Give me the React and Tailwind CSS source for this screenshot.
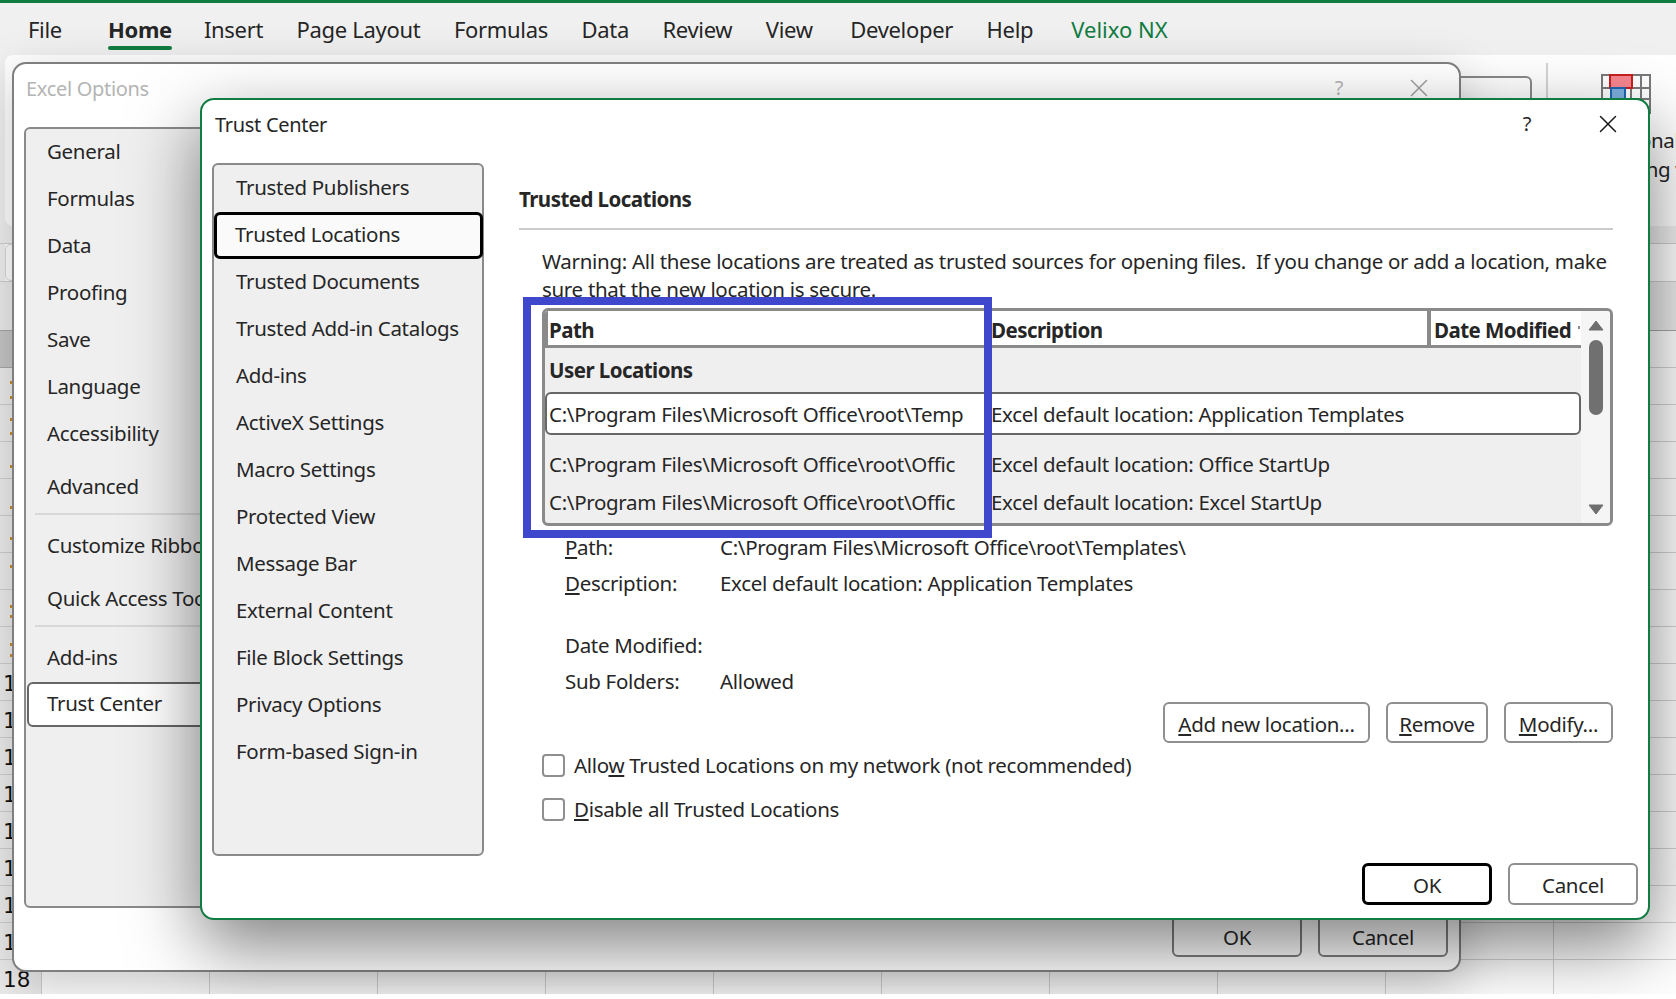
import { X } from "lucide-react";

const tabs = ["Insert", "Page Layout", "Formulas", "Data", "Review", "View", "Developer", "Help"];
const optionsTop = ["General", "Formulas", "Data", "Proofing", "Save", "Language", "Accessibility"];
const trustItems = [
  "Trusted Publishers",
  "Trusted Locations",
  "Trusted Documents",
  "Trusted Add-in Catalogs",
  "Add-ins",
  "ActiveX Settings",
  "Macro Settings",
  "Protected View",
  "Message Bar",
  "External Content",
  "File Block Settings",
  "Privacy Options",
  "Form-based Sign-in",
];
const rows = [1, 2, 3, 4, 5, 6, 7, 8, 9, 10, 11, 12, 13, 14, 15, 16, 17, 18];
const cols = [0, 1, 2, 3, 4, 5, 6, 7, 8, 9];
// bits of the row numbers that stick out left of the Excel Options window
const specks = [381, 396, 418, 432, 465, 506, 537, 565, 605, 615, 643, 654];

function Sheet() {
  return (
    <div className="flex h-[994px] flex-col overflow-hidden bg-white">
      <div className="h-[3px] shrink-0 bg-[#107c41]" />

      {/* tab strip */}
      <div className="flex h-[52px] shrink-0 bg-[#f0f0f0] pl-[28px] pt-[9px] text-[22px] text-[#262626]">
        <span className="h-[34px] leading-[34px]">File</span>
        <span className="ml-[46px] flex h-[38px] flex-col font-bold leading-[34px]">
          Home
          <span className="h-[4px] w-full shrink-0 rounded-sm bg-[#107c41]" />
        </span>
        <div className="ml-[32px] flex gap-[33.5px] leading-[34px]">
          {tabs.map((t) => (
            <span key={t} className={t === "Developer" ? "ml-[4px]" : ""}>
              {t}
            </span>
          ))}
        </div>
        <span className="ml-[38px] leading-[34px] tracking-normal text-[#107c41]">Velixo NX</span>
      </div>

      {/* ribbon, mostly hidden behind the dialogs */}
      <div className="h-[174px] shrink-0 bg-[#f0f0f0] pb-[3px] pl-[5px]">
        <div className="flex h-full items-start rounded-l-lg bg-white">
          <div className="ml-[1395px] mt-[21px] h-[40px] w-[132px] shrink-0 rounded-md border-2 border-[#8a8a8a]" />
          <div className="ml-[14px] mt-[8px] h-[110px] w-[2px] shrink-0 bg-[#d4d4d4]" />
          <div className="ml-[-3px] mt-[19px] flex w-[162px] shrink-0 flex-col items-center leading-[29px] text-[#262626]">
            <svg width="50" height="40" viewBox="0 0 50 40" className="shrink-0">
              <path d="M1 1H49V39H1ZM1 14H49M1 25H49M10 1V39M30 1V39M40 1V39" fill="none" stroke="#7a7a7a" strokeWidth="2" />
              <rect x="9" y="1" width="22" height="13" fill="#f88690" stroke="#c8201f" strokeWidth="2" />
              <rect x="10" y="14" width="14" height="11" fill="#7db1e0" stroke="#1f66b0" strokeWidth="2" />
            </svg>
            <span className="mt-[12px] whitespace-nowrap">Conditional</span>
            <span className="whitespace-nowrap">Formatting ▾</span>
          </div>
        </div>
      </div>

      <div className="h-[14px] shrink-0 bg-[#f0f0f0]" />

      {/* formula bar */}
      <div className="flex h-[39px] shrink-0 border-y border-[#cfcfcf] bg-white">
        <div className="w-[5px] shrink-0 bg-[#f0f0f0]" />
        <div className="h-full w-[100px] rounded-l-md border border-[#d8d8d8] bg-white" />
      </div>

      {/* column headers */}
      <div className="h-[49px] shrink-0 border-b border-[#a8a8a8] bg-[#ececec]" />

      {/* cells */}
      {rows.map((r) => (
        <div key={r} className="flex h-[37px] shrink-0">
          <div
            className={
              r === 1
                ? "h-full w-[42px] shrink-0 border-b border-r border-[#a8a8a8] bg-[#c6c6c6]"
                : "h-full w-[42px] shrink-0 border-b border-r border-[#cfcfcf] bg-[#ededed] pl-[3px] font-['DejaVu_Sans',sans-serif] text-[21.5px] leading-[39px] tracking-normal text-[#111111]"
            }
          >
            {r >= 10 ? r : ""}
          </div>
          {cols.map((c) => (
            <div key={c} className="h-full w-[168px] shrink-0 border-b border-r border-[#d4d4d4]" />
          ))}
        </div>
      ))}
    </div>
  );
}

function OptionsItem({ children, className = "" }) {
  return <div className={`flex h-[47px] items-center whitespace-nowrap pb-[2px] pl-[21px] ${className}`}>{children}</div>;
}

function ExcelOptions() {
  return (
    <div className="absolute left-[12px] top-[62px] flex h-[910px] w-[1449px] flex-col rounded-[14px] border-2 border-[#7f7f7f] bg-white shadow-[0_14px_50px_rgba(0,0,0,0.22)]">
      <div className="flex h-[63px] shrink-0 items-start justify-between pl-[12px] pt-[10px] text-[20px] text-[#b4b4b4]">
        <span>Excel Options</span>
        <div className="mt-[-1px] flex items-center pr-[25px]">
          <span>?</span>
          <X size={30} strokeWidth={1.2} className="ml-[61px] text-[#a0a0a0]" />
        </div>
      </div>
      <div className="ml-[10px] flex h-[781px] w-[500px] shrink-0 flex-col rounded-md border-2 border-[#8a8a8a] bg-[#efefef]">
        {optionsTop.map((t) => (
          <OptionsItem key={t}>{t}</OptionsItem>
        ))}
        <OptionsItem className="mt-[6px]">Advanced</OptionsItem>
        <div className="ml-[9px] mt-[2px] h-[2px] bg-[#d8d8d8]" />
        <OptionsItem className="mt-[8px]">Customize Ribbon</OptionsItem>
        <OptionsItem className="mt-[6px]">Quick Access Toolbar</OptionsItem>
        <div className="ml-[9px] mt-[2px] h-[2px] bg-[#d8d8d8]" />
        <OptionsItem className="mt-[8px]">Add-ins</OptionsItem>
        <div className="ml-[1px] flex h-[45px] items-center rounded-md border-2 border-[#666666] bg-white pb-[2px] pl-[18px]">Trust Center</div>
      </div>
      <div className="mr-[11px] mt-[7px] flex justify-end gap-[16px] text-[#262626]">
        <div className="flex h-[42px] w-[130px] items-center justify-center rounded-md border-2 border-[#7f7f7f] pt-[2px]">OK</div>
        <div className="flex h-[42px] w-[130px] items-center justify-center rounded-md border-2 border-[#7f7f7f] pt-[2px]">Cancel</div>
      </div>
    </div>
  );
}

function SmallButton({ children, className = "" }) {
  return (
    <div className={`flex h-[41px] items-center justify-center rounded-md border-2 border-[#8f8f8f] bg-white pt-[4px] ${className}`}>
      {children}
    </div>
  );
}

function LocationRow({ path, desc, selected }) {
  if (selected) {
    return (
      <div className="flex h-[43px] shrink-0 items-center rounded-md border-2 border-[#666666] bg-white pl-[2px] pt-[2px]">
        <span className="w-[442px] shrink-0 overflow-hidden whitespace-nowrap">{path}</span>
        <span className="whitespace-nowrap">{desc}</span>
      </div>
    );
  }
  return (
    <div className="flex h-[38px] shrink-0 items-center pb-[2px] pl-[4px]">
      <span className="w-[442px] shrink-0 overflow-hidden whitespace-nowrap">{path}</span>
      <span className="whitespace-nowrap">{desc}</span>
    </div>
  );
}

function LocationsTable() {
  return (
    <div className="ml-[23px] mr-[25px] mt-[5px] flex h-[218px] overflow-hidden rounded-md border-[3px] border-[#8a8a8a] bg-[#efefef]">
      <div className="flex w-[1036px] shrink-0 flex-col">
        <div className="flex h-[37px] shrink-0 border-b-[3px] border-l-[3px] border-[#8a8a8a] bg-white pr-px font-bold tracking-[-0.55px]">
          <div className="flex w-[443px] shrink-0 items-center border-r-[3px] border-[#8a8a8a] pl-px pt-[5px]">Path</div>
          <div className="flex w-[436px] shrink-0 items-center pt-[5px]">Description</div>
          <div className="flex min-w-0 flex-1 items-center justify-between overflow-hidden whitespace-nowrap border-l-[4px] border-[#8a8a8a] pl-[3px] pt-[5px]">
            Date Modified
            <span className="mb-[6px] h-[3px] w-[2px] shrink-0 bg-[#8a8a8a]" />
          </div>
        </div>
        <div className="flex h-[44px] shrink-0 items-center pl-[4px] font-bold tracking-[-0.55px]">User Locations</div>
        <LocationRow selected path="C:\Program Files\Microsoft Office\root\Temp" desc="Excel default location: Application Templates" />
        <div className="h-[11px] shrink-0" />
        <LocationRow path="C:\Program Files\Microsoft Office\root\Offic" desc="Excel default location: Office StartUp" />
        <LocationRow path="C:\Program Files\Microsoft Office\root\Offic" desc="Excel default location: Excel StartUp" />
      </div>
      <div className="flex min-w-0 flex-1 flex-col items-center bg-[#f5f5f5] pt-[9px]">
        <svg width="16" height="11" viewBox="0 0 16 11" className="shrink-0">
          <path d="M8 1L15 10H1Z" fill="#6e6e6e" stroke="#6e6e6e" strokeLinejoin="round" />
        </svg>
        <div className="mt-[9px] h-[75px] w-[14px] shrink-0 rounded-full bg-[#707070]" />
        <svg width="16" height="11" viewBox="0 0 16 11" className="mt-[89px] shrink-0">
          <path d="M8 10L15 1H1Z" fill="#6e6e6e" stroke="#6e6e6e" strokeLinejoin="round" />
        </svg>
      </div>
    </div>
  );
}

function Detail({ label, value, className = "" }) {
  return (
    <div className={`flex h-[36px] items-center pl-[46px] ${className}`}>
      <span className="w-[155px] shrink-0">{label}</span>
      <span>{value}</span>
    </div>
  );
}

function CheckRow({ children, className = "" }) {
  return (
    <div className={`ml-[23px] flex h-[23px] items-center gap-[9px] ${className}`}>
      <span className="h-[23px] w-[23px] shrink-0 rounded-[4px] border-2 border-[#8f8f8f] bg-white" />
      <span className="whitespace-nowrap">{children}</span>
    </div>
  );
}

function TrustCenter() {
  return (
    <div className="absolute left-[200px] top-[98px] flex h-[822px] w-[1450px] flex-col rounded-[14px] border-2 border-[#107c41] bg-white shadow-[0_26px_70px_rgba(0,0,0,0.5)]">
      <div className="flex h-[63px] shrink-0 items-start justify-between pl-[13px] pt-[10px] text-[20px]">
        <span>Trust Center</span>
        <div className="mt-[-1px] flex items-center pr-[25px]">
          <span>?</span>
          <X size={30} strokeWidth={1.2} className="ml-[62px] text-[#1a1a1a]" />
        </div>
      </div>
      <div className="flex flex-1">
        <div className="ml-[10px] flex h-[693px] w-[272px] shrink-0 flex-col rounded-md border-2 border-[#8a8a8a] bg-[#efefef]">
          {trustItems.map((t) =>
            t === "Trusted Locations" ? (
              <div key={t} className="mr-[-1px] flex h-[47px] shrink-0 items-center rounded-md border-[3.5px] border-black bg-[#fafafa] pb-[2px] pl-[18px]">
                {t}
              </div>
            ) : (
              <div key={t} className="flex h-[47px] shrink-0 items-center pb-[2px] pl-[22px]">
                {t}
              </div>
            ),
          )}
        </div>
        <div className="ml-[35px] flex w-[1119px] shrink-0 flex-col">
          <h2 className="mt-[19px] font-bold leading-[34px] tracking-[-0.55px]">Trusted Locations</h2>
          <div className="mr-[25px] mt-[12px] h-[2px] shrink-0 bg-[#cccccc]" />
          <p className="ml-[23px] mt-[17px] whitespace-pre leading-[28px]">
            {"Warning: All these locations are treated as trusted sources for opening files.  If you change or add a location, make\nsure that the new location is secure."}
          </p>
          <LocationsTable />
          <Detail className="mt-[3px]" label={<><u>P</u>ath:</>} value="C:\Program Files\Microsoft Office\root\Templates\" />
          <Detail label={<><u>D</u>escription:</>} value="Excel default location: Application Templates" />
          <Detail className="mt-[26px]" label="Date Modified:" value="" />
          <Detail label="Sub Folders:" value="Allowed" />
          <div className="mr-[25px] mt-[3px] flex justify-end gap-[16px]">
            <SmallButton className="w-[207px]"><span><u>A</u>dd new location...</span></SmallButton>
            <SmallButton className="w-[102px]"><span><u>R</u>emove</span></SmallButton>
            <SmallButton className="w-[109px]"><span><u>M</u>odify...</span></SmallButton>
          </div>
          <CheckRow className="mt-[11px]"><>Allo<u>w</u> Trusted Locations on my network (not recommended)</></CheckRow>
          <CheckRow className="mt-[21px]"><><u>D</u>isable all Trusted Locations</></CheckRow>
          <div className="mt-[42px] flex justify-end gap-[16px]">
            <div className="flex h-[42px] w-[130px] items-center justify-center rounded-md border-[3.5px] border-black pt-[2px]">OK</div>
            <div className="flex h-[42px] w-[130px] items-center justify-center rounded-md border-2 border-[#8f8f8f] pt-[2px]">Cancel</div>
          </div>
        </div>
      </div>
    </div>
  );
}

export default function App() {
  return (
    <div className="relative h-[999px] w-[1676px] overflow-hidden bg-white font-['Noto_Sans','Open_Sans',sans-serif] text-[20.5px] tracking-[-0.31px] text-[#262626]">
      <div className="relative h-[994px] overflow-hidden">
        <Sheet />
        {specks.map((y) => (
          <span key={y} className="absolute left-[10px] h-[3px] w-[2px] bg-[#d08a2c]" style={{ top: y }} />
        ))}
        <ExcelOptions />
        <TrustCenter />
        {/* highlight drawn over the screenshot */}
        <div className="absolute left-[523px] top-[297px] h-[241px] w-[469px] border-[8px] border-[#3f48cc]" />
      </div>
    </div>
  );
}
